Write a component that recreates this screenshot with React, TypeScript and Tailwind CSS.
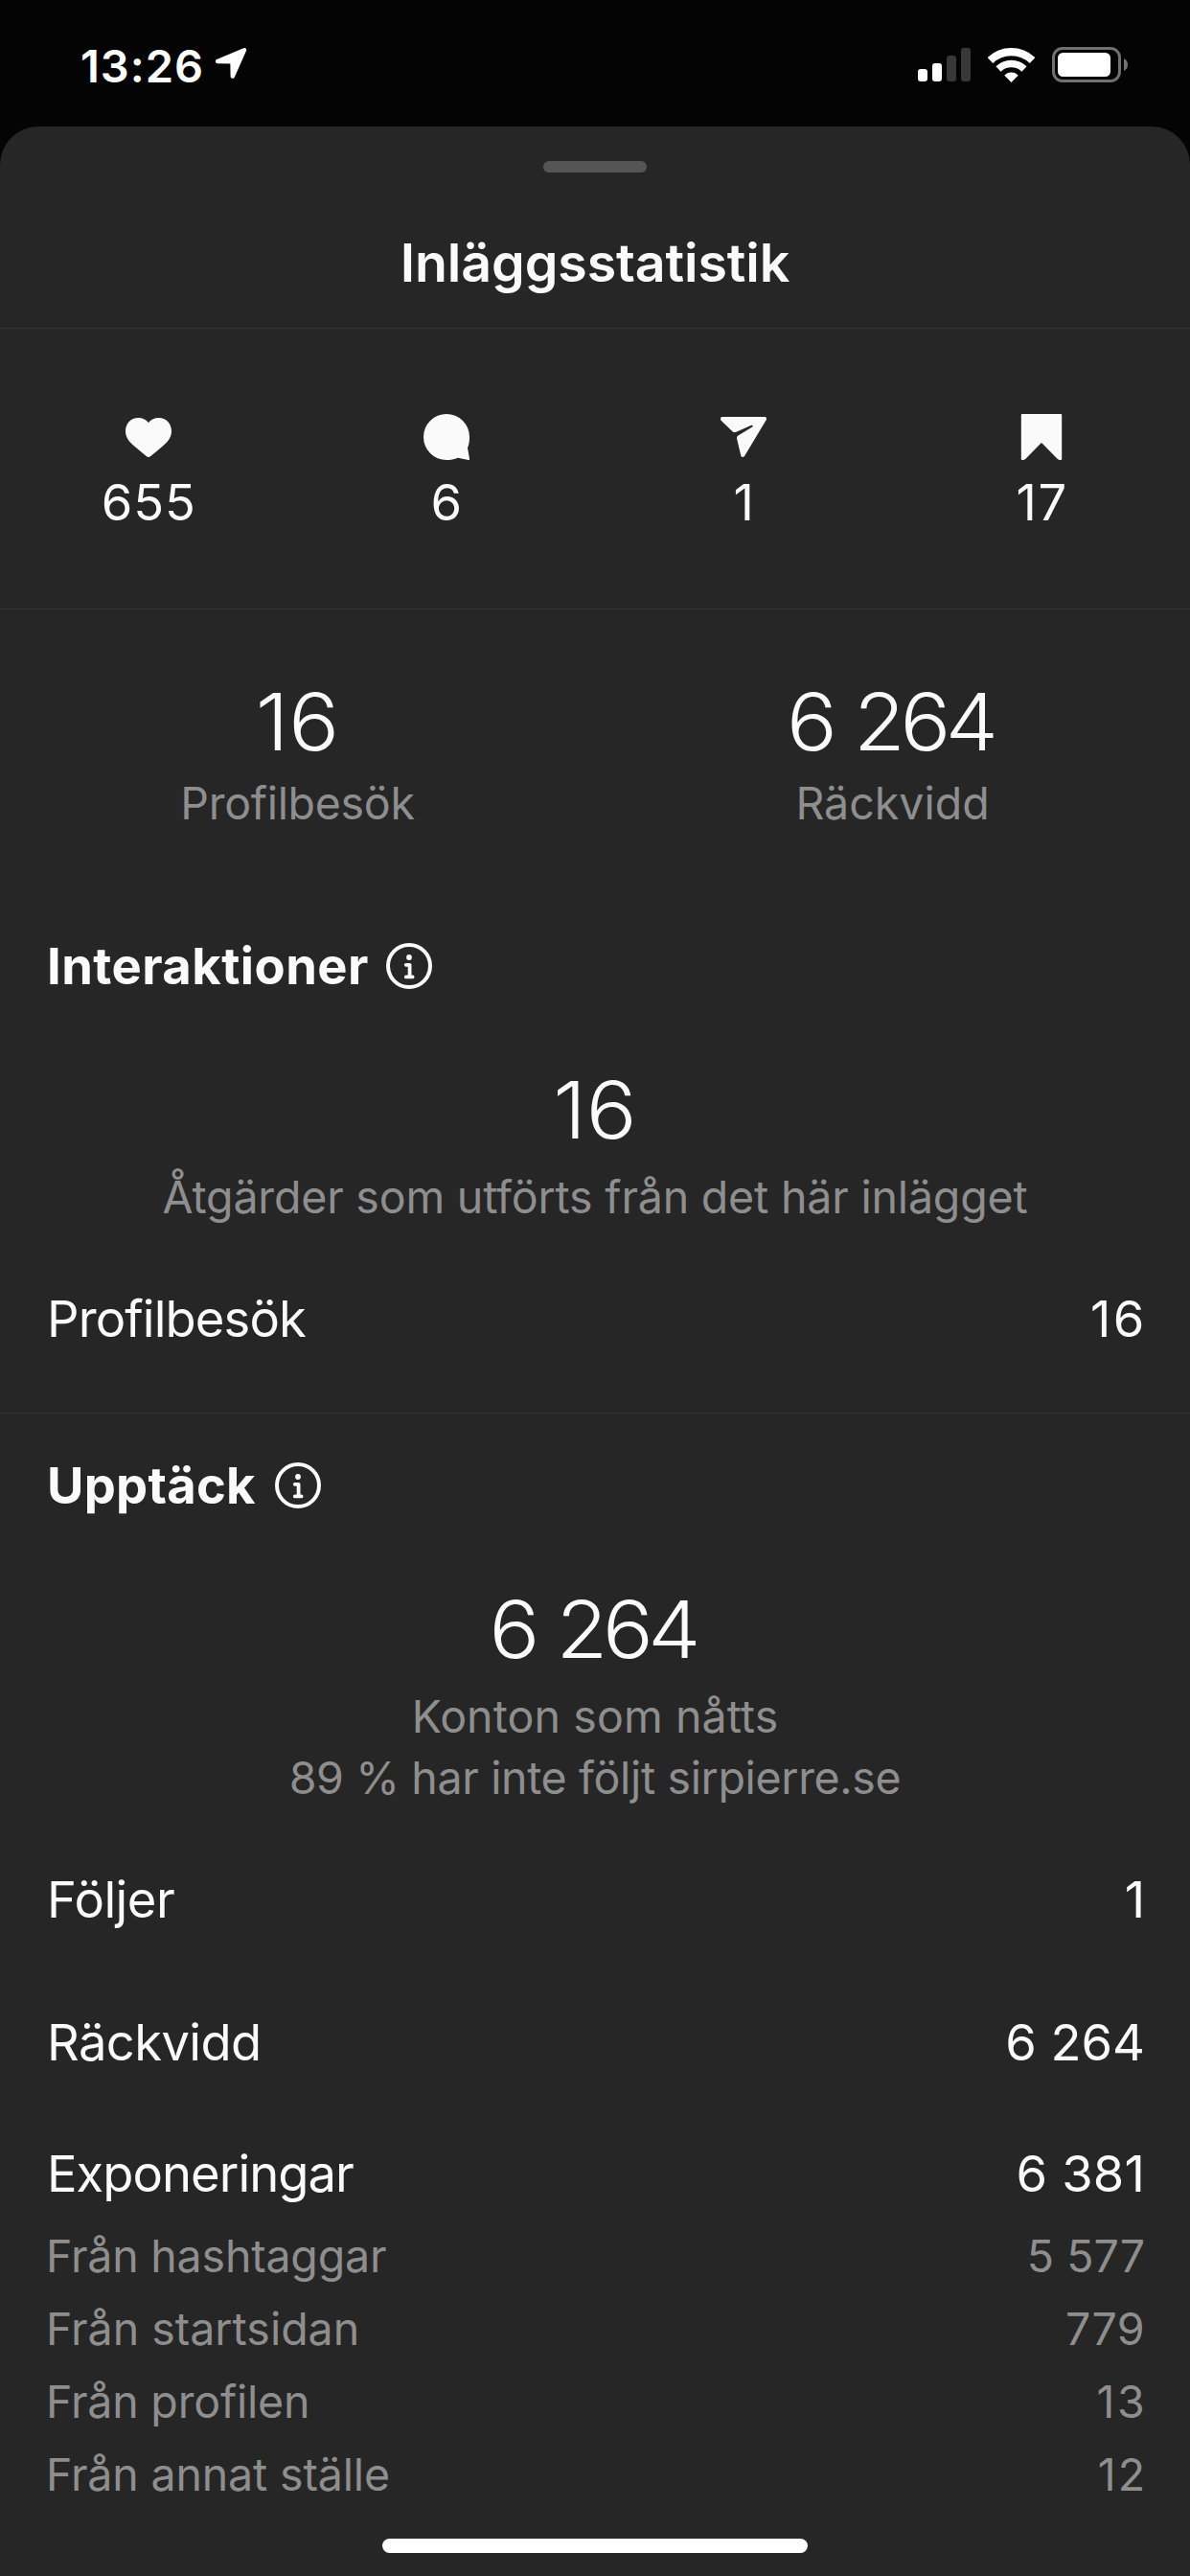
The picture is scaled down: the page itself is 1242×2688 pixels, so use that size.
import type { ReactNode } from "react";

function LocationArrow() {
  return (
    <svg viewBox="0 0 34 34" className="h-[34px] w-[34px]" fill="#fff" stroke="#fff" strokeWidth="4.4" strokeLinejoin="round">
      <path d="M3 15 L31 3.2 L18.8 30.6 L18.5 15.2 Z" />
    </svg>
  );
}

function Signal() {
  return (
    <div className="flex items-end gap-[5px]">
      <span className="h-[13px] w-[10px] rounded-[3px] bg-white" />
      <span className="h-[19px] w-[10px] rounded-[3px] bg-white" />
      <span className="h-[27px] w-[10px] rounded-[3px] bg-[#383838]" />
      <span className="h-[35px] w-[10px] rounded-[3px] bg-[#383838]" />
    </div>
  );
}

function Wifi() {
  return (
    <svg viewBox="0 0 49 36" className="h-[36px] w-[49px]" fill="none" stroke="#fff">
      <path d="M2.4 13.1 A31.8 31.8 0 0 1 46.6 13.1" strokeWidth="8.2" />
      <path d="M11 22 A19.4 19.4 0 0 1 38 22" strokeWidth="7.4" />
      <path d="M24.5 36 L17.6 29.1 Q17.2 28.4 17.9 27.9 A10.5 10.5 0 0 1 31.1 27.9 Q31.8 28.4 31.4 29.1 Z" fill="#fff" stroke="none" />
    </svg>
  );
}

function Battery() {
  return (
    <svg viewBox="0 0 79 37" className="h-[37px] w-[79px]">
      <rect x="1.5" y="1.5" width="69" height="34" rx="9.5" fill="none" stroke="#717171" strokeWidth="3" />
      <rect x="6" y="6" width="55" height="25" rx="5.5" fill="#fff" />
      <path d="M75 12 Q79 14 79 18.5 Q79 23 75 25 Z" fill="#717171" />
    </svg>
  );
}

function Heart() {
  return (
    <svg viewBox="0 0 48 48" className="size-12" fill="#fafafa">
      <path d="M24 9 C26.8 5.5 30.5 4 34.5 4 C42.5 4 48 10 48 18 C48 25 43.5 29.5 38 34.3 L26 44.3 Q24 45.7 22 44.3 L10 34.3 C4.5 29.5 0 25 0 18 C0 10 5.5 4 13.5 4 C17.5 4 21.2 5.5 24 9 Z" />
    </svg>
  );
}

function Comment() {
  return (
    <svg viewBox="0 0 48 48" className="size-12" fill="#fafafa">
      <path d="M48 24 C48 28 47.6 32 46 35.2 L48 46.8 Q48.2 48.2 46.8 48 L36 45.7 C32 47.4 28 48 24 48 A24 24 0 1 1 48 24 Z" />
    </svg>
  );
}

function Share() {
  return (
    <svg viewBox="0 0 48 48" className="size-12" fill="#fafafa">
      <path d="M1.6 3 H46.4 Q48 3 48 4.8 Q48 5.8 47.5 6.6 L25 43.9 Q24.2 45 22.9 45 Q21.6 45 21.3 43.6 L17 25.5 Q16.8 23.6 18.4 22.6 L33.2 13.4 Q34 12.7 33.6 12.1 Q33.2 11.5 32.2 11.8 L16.4 18.8 Q14.3 19.5 12.7 18.4 L0.8 6.9 Q0 6 0 4.8 Q0 3 1.6 3 Z" />
    </svg>
  );
}

function Bookmark() {
  return (
    <svg viewBox="0 0 48 48" className="size-12" fill="#fafafa">
      <path d="M3.8 0 H44.2 Q45.2 0 45.2 1 V47 Q45.2 48 44.2 48 H42.6 L40.8 47 L24.6 30.4 Q24 29.9 23.4 30.4 L7.2 47 L5.4 48 H3.8 Q2.8 48 2.8 47 V1 Q2.8 0 3.8 0 Z" />
    </svg>
  );
}

function Info() {
  return (
    <svg viewBox="0 0 48 48" className="size-12" fill="none" stroke="#fafafa" strokeLinecap="round" strokeLinejoin="round">
      <circle cx="24" cy="24" r="22" strokeWidth="4" />
      <circle cx="24" cy="15" r="2.9" fill="#fafafa" stroke="none" />
      <path d="M20.8 22.8 H24.6 V35.4 M20.8 35.4 H27.6" strokeWidth="3.8" />
    </svg>
  );
}

function Count({ icon, children }: { icon: ReactNode; children: ReactNode }) {
  return (
    <div className="flex flex-col items-center gap-[14px]">
      {icon}
      <div className="text-[52.5px] leading-[60px]">{children}</div>
    </div>
  );
}

function BigNumber({ children }: { children: ReactNode }) {
  return <div className="scale-x-107 pt-px text-center text-[82px] leading-[95px] font-light">{children}</div>;
}

function Reach() {
  return <span className="mr-[5px] tracking-[-5px] [word-spacing:3px]">6 264</span>;
}

function Heading({ children }: { children: ReactNode }) {
  return (
    <div className="flex h-16 items-center pr-12 pl-[49px]">
      {children}
      <Info />
    </div>
  );
}

function Row({ children }: { children: ReactNode }) {
  return <div className="flex h-16 items-center justify-between pr-[47px] pl-[49px] text-[52.5px]">{children}</div>;
}

function SubRow({ children }: { children: ReactNode }) {
  return (
    <div className="flex h-[76px] items-center justify-between pr-[47px] pl-12 text-[46.5px] text-[#8e8e8e]">{children}</div>
  );
}

export default function App() {
  return (
    <div className="h-[2688px] w-[1242px] overflow-hidden bg-[#040404] font-['Inter','Liberation_Sans',sans-serif] whitespace-nowrap text-[#fafafa]">
      <div className="flex h-[132px] items-center pr-[65px] pl-[84px] text-white">
        <span className="mt-1 w-[128px] text-[47px] leading-none font-semibold tracking-[1px]">13:26</span>
        <span className="ml-[12px]">
          <LocationArrow />
        </span>
        <div className="mt-[3px] ml-auto flex items-center gap-[18px]">
          <Signal />
          <Wifi />
          <Battery />
        </div>
      </div>

      <div className="h-[2556px] rounded-t-[40px] bg-[#262626]">
        <header className="flex h-[211px] flex-col items-center border-b border-[#363636] pt-9">
          <div className="h-3 w-[108px] rounded-full bg-[#555]" />
          <h1 className="mt-[58px] text-[55.5px] leading-[72px] font-semibold tracking-[-0.1px]">Inläggsstatistik</h1>
        </header>

        <section className="grid h-[293px] grid-cols-4 border-b border-[#363636] pt-[89px]">
          <Count icon={<Heart />}>
            <span className="tracking-[0.8px]">655</span>
          </Count>
          <Count icon={<Comment />}>6</Count>
          <Count icon={<Share />}>1</Count>
          <Count icon={<Bookmark />}>
            <span className="-mr-[2px] tracking-[1.6px]">17</span>
          </Count>
        </section>

        <section className="grid grid-cols-2 pt-[69px] text-center">
          <div>
            <BigNumber>16</BigNumber>
            <div className="mt-[7px] text-[46.5px] leading-[60px] tracking-[-0.3px] text-[#8e8e8e]">Profilbesök</div>
          </div>
          <div>
            <BigNumber>
              <Reach />
            </BigNumber>
            <div className="mt-[7px] text-[46.5px] leading-[60px] text-[#8e8e8e]">Räckvidd</div>
          </div>
        </section>

        <section className="mt-[108px] border-b border-[#363636] pb-[66px]">
          <Heading>
            <h2 className="w-[354px] text-[52.5px] font-bold tracking-[0.45px]">Interaktioner</h2>
          </Heading>
          <div className="mt-[70px]">
            <BigNumber>16</BigNumber>
          </div>
          <p className="mt-[11px] text-center text-[46.5px] leading-[64px] tracking-[-0.18px] text-[#8e8e8e]">
            Åtgärder som utförts från det här inlägget
          </p>
          <div className="mt-[63px]">
            <Row>
              <span className="tracking-[-0.87px]">Profilbesök</span>
              <span className="-mr-[2px] tracking-[2.6px]">16</span>
            </Row>
          </div>
        </section>

        <section className="pt-[43px]">
          <Heading>
            <h2 className="w-[238px] text-[52.5px] font-bold tracking-[0.26px]">Upptäck</h2>
          </Heading>
          <div className="mt-[70px]">
            <BigNumber>
              <Reach />
            </BigNumber>
          </div>
          <div className="mt-[11px] text-center text-[46.5px] leading-[64px] text-[#8e8e8e]">
            <p className="tracking-[0.1px]">Konton som nåtts</p>
            <p className="tracking-[-0.35px]">89 % har inte följt sirpierre.se</p>
          </div>
          <div className="mt-[63px]">
            <Row>
              <span className="tracking-[-0.5px]">Följer</span>
              <span>1</span>
            </Row>
          </div>
          <div className="mt-[85px]">
            <Row>
              <span className="tracking-[-0.6px]">Räckvidd</span>
              <span>6 264</span>
            </Row>
          </div>
          <div className="mt-[73px]">
            <Row>
              <span className="tracking-[-0.95px]">Exponeringar</span>
              <span className="tracking-[0.2px]">6 381</span>
            </Row>
          </div>
          <div className="mt-[17px]">
            <SubRow>
              <span className="tracking-[-0.19px]">Från hashtaggar</span>
              <span>5 577</span>
            </SubRow>
            <SubRow>
              <span>Från startsidan</span>
              <span className="tracking-[0.4px]">779</span>
            </SubRow>
            <SubRow>
              <span className="tracking-[-0.18px]">Från profilen</span>
              <span className="-mr-[2px] tracking-[2.4px]">13</span>
            </SubRow>
            <SubRow>
              <span className="tracking-[-0.15px]">Från annat ställe</span>
              <span className="-mr-[2px] tracking-[2px]">12</span>
            </SubRow>
          </div>
        </section>

        <div className="mx-auto mt-[28px] h-[15px] w-[444px] rounded-full bg-white" />
      </div>
    </div>
  );
}
